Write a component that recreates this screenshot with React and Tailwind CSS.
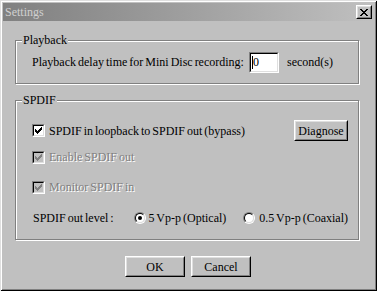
import React from "react";

function CheckMark({ color }) {
  const rows = [
    [[6, 1]],
    [[5, 2]],
    [[0, 1], [4, 3]],
    [[0, 2], [3, 3]],
    [[0, 5]],
    [[1, 3]],
    [[2, 1]],
  ];
  return (
    <svg width="7" height="7" viewBox="0 0 7 7" shapeRendering="crispEdges">
      {rows.map((r, y) =>
        r.map(([x, w], i) => <rect key={y + "-" + i} x={x} y={y} width={w} height={1} fill={color} />)
      )}
    </svg>
  );
}

function Check({ checked, disabled }) {
  return (
    <span className="flex w-[13px] h-[13px] shrink-0 border border-t-[#808080] border-l-[#808080] border-r-white border-b-white">
      <span
        className={
          "flex flex-1 items-center justify-center border border-t-black border-l-black border-r-[#dfdfdf] border-b-[#dfdfdf] " +
          (disabled ? "bg-[#c0c0c0]" : "bg-white")
        }
      >
        {checked && <CheckMark color={disabled ? "#808080" : "#000"} />}
      </span>
    </span>
  );
}

function Radio({ checked }) {
  return (
    <span className="flex w-[12px] h-[12px] shrink-0 rounded-full border border-t-[#808080] border-l-[#808080] border-r-white border-b-white">
      <span className="flex flex-1 items-center justify-center rounded-full bg-white border border-t-black border-l-black border-r-[#dfdfdf] border-b-[#dfdfdf]">
        {checked && <span className="block w-[4px] h-[4px] rounded-full bg-black" />}
      </span>
    </span>
  );
}

function Button({ children, className = "" }) {
  return (
    <div className={"flex h-[21px] border border-t-white border-l-white border-r-black border-b-black " + className}>
      <div className="flex flex-1 items-center justify-center border border-t-[#dfdfdf] border-l-[#dfdfdf] border-r-[#808080] border-b-[#808080] bg-[#c0c0c0] text-[12px] text-black leading-none whitespace-nowrap">
        {children}
      </div>
    </div>
  );
}

function Group({ title, className = "", children }) {
  return (
    <div
      className={
        "relative w-[344px] border border-[#808080] shadow-[1px_1px_0_#fff,inset_1px_1px_0_#fff] " + className
      }
    >
      <span className="absolute left-[6px] top-[-8px] bg-[#c0c0c0] px-[1px] text-[12px] leading-[14px] text-black">
        {title}
      </span>
      {children}
    </div>
  );
}

const disabledText = "text-[#808080] [text-shadow:1px_1px_0_#fff]";

export default function App() {
  return (
    <div className="w-[377px] h-[291px] bg-[#c0c0c0] font-['Liberation_Serif'] text-[12px] [word-spacing:-1px] text-black flex flex-col shadow-[inset_1px_1px_0_#dfdfdf,inset_-1px_-1px_0_#000,inset_2px_2px_0_#fff,inset_-2px_-2px_0_#808080] overflow-hidden whitespace-nowrap">
      {/* Title bar */}
      <div className="mt-[3px] mx-[3px] h-[18px] flex items-center bg-gradient-to-r from-[#808080] to-[#c0c0c0] pl-[2px] pr-[2px]">
        <span className="text-[12px] text-[#d0d0d0] leading-none">Settings</span>
        <div className="ml-auto flex w-[16px] h-[14px] border border-t-white border-l-white border-r-black border-b-black">
          <div className="flex flex-1 items-center justify-center border border-t-[#dfdfdf] border-l-[#dfdfdf] border-r-[#808080] border-b-[#808080] bg-[#c0c0c0]">
            <svg width="8" height="7" viewBox="0 0 8 7" shapeRendering="crispEdges">
              {[
                [0, 0], [1, 1], [2, 2], [3, 3], [2, 4], [1, 5], [0, 6],
              ].map(([x, y], i) => (
                <rect key={"a" + i} x={x} y={y} width="2" height="1" fill="#000" />
              ))}
              {[
                [6, 0], [5, 1], [4, 2], [4, 4], [5, 5], [6, 6],
              ].map(([x, y], i) => (
                <rect key={"b" + i} x={x} y={y} width="2" height="1" fill="#000" />
              ))}
            </svg>
          </div>
        </div>
      </div>

      <div className="pl-[15px] flex flex-col">
        {/* Playback */}
        <Group title="Playback" className="mt-[19px] h-[44px]">
          <div className="flex h-full items-center pl-[16px]">
            <span className="w-[217px]">Playback delay time for Mini Disc recording:</span>
            <span className="flex w-[30px] h-[21px] border border-t-[#808080] border-l-[#808080] border-r-white border-b-white">
              <span className="flex flex-1 items-center bg-white border border-t-black border-l-black border-r-[#dfdfdf] border-b-[#dfdfdf] pl-[1px]">
                <span className="block w-[1px] h-[13px] bg-black" />
                <span className="leading-none">0</span>
              </span>
            </span>
            <span className="ml-[8px]">second(s)</span>
          </div>
        </Group>

        {/* SPDIF */}
        <Group title="SPDIF" className="mt-[16px] h-[140px]">
          <div className="flex flex-col pl-[16px] pr-[10px] pt-[19px]">
            <div className="flex h-[21px] items-center">
              <Check checked />
              <span className="ml-[4px]">SPDIF in loopback to SPDIF out (bypass)</span>
              <Button className="ml-auto w-[54px]">Diagnose</Button>
            </div>
            <div className="flex h-[20px] mt-[6px] items-center">
              <Check checked disabled />
              <span className={"ml-[4px] " + disabledText}>Enable SPDIF out</span>
            </div>
            <div className="flex h-[20px] mt-[10px] items-center">
              <Check checked disabled />
              <span className={"ml-[4px] " + disabledText}>Monitor SPDIF in</span>
            </div>
            <div className="flex h-[20px] mt-[11px] items-center">
              <span className="w-[104px] pl-[1px]">SPDIF out level :</span>
              <Radio checked />
              <span className="ml-[3px] w-[97px]">5 Vp-p (Optical)</span>
              <Radio />
              <span className="ml-[4px]">0.5 Vp-p (Coaxial)</span>
            </div>
          </div>
        </Group>
      </div>

      {/* Buttons */}
      <div className="flex mt-[16px] pl-[125px] gap-[6px]">
        <Button className="w-[60px]">OK</Button>
        <Button className="w-[60px]">Cancel</Button>
      </div>
    </div>
  );
}
